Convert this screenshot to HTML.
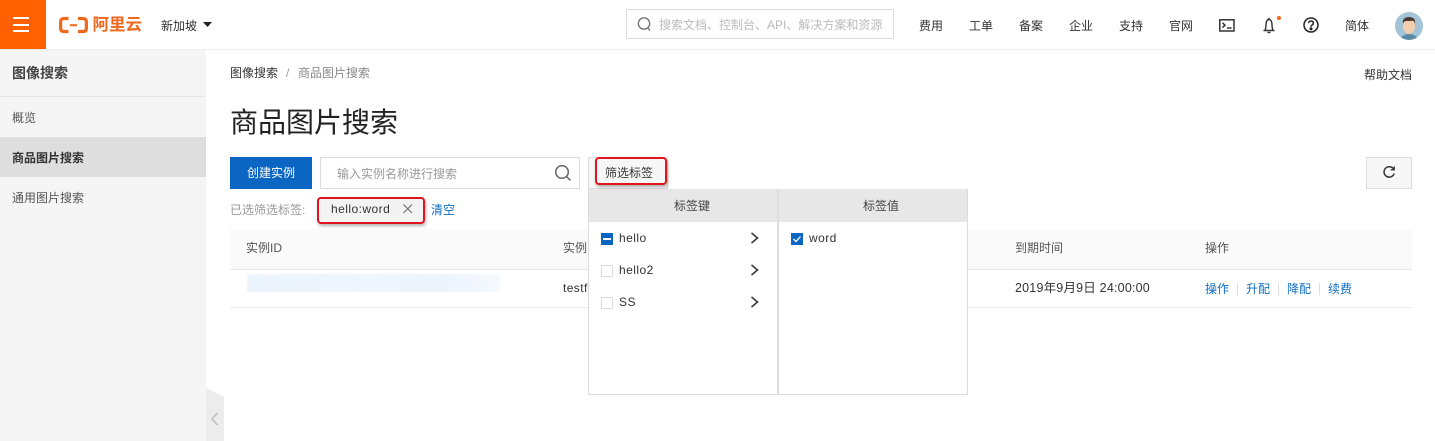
<!DOCTYPE html>
<html lang="zh-CN"><head><meta charset="utf-8"><title>商品图片搜索</title>
<style>
*{box-sizing:border-box}
html,body{margin:0;padding:0;width:1435px;height:441px;overflow:hidden;background:#fff}
body{position:relative;font-family:"Liberation Sans","Noto Sans CJK SC",sans-serif;font-size:12px;color:#333}
.a{position:absolute;white-space:nowrap}
.nav{font-size:12px;color:#333;top:18px;line-height:16px}
.link{color:#0f6fc4}
.cb{position:absolute;width:12px;height:12px;border:1px solid #ddd;background:#fff}
.cbon{background:#0a66c2;border-color:#0a66c2}
</style></head><body>
<!-- top bar -->
<div class="a" style="left:0;top:0;width:1435px;height:50px;background:#fff;border-bottom:1px solid #eee"></div>
<div class="a" style="left:0;top:0;width:46px;height:49px;background:#ff6000"></div>
<div class="a" style="left:13px;top:17px;width:16px;height:2px;background:#fff"></div>
<div class="a" style="left:13px;top:24px;width:16px;height:2px;background:#fff"></div>
<div class="a" style="left:13px;top:30px;width:16px;height:2px;background:#fff"></div>
<svg class="a" style="left:58px;top:16px" width="32" height="19" viewBox="0 0 32 19" fill="none" stroke="#f0671e" stroke-width="3.2"><path d="M10.500 2.500H6Q2.600 2.500 2.600 5.900V12.100Q2.600 15.500 6 15.500H10.500"/><path d="M20 2.500H25Q28.400 2.500 28.400 5.900V12.100Q28.400 15.500 25 15.500H20"/><path d="M12 9.200H19" stroke-width="2"/></svg>
<div class="a" style="left:92.500px;top:14px;font-size:16.500px;line-height:22px;font-weight:700;color:#f0671e">阿里云</div>
<div class="a nav" style="left:161px">新加坡</div>
<svg class="a" style="left:202.500px;top:22px" width="9" height="6"><path d="M0 0H9L4.500 5Z" fill="#222"/></svg>
<div class="a" style="left:626px;top:9px;width:268px;height:30px;border:1px solid #dcdcdc"></div>
<svg class="a" style="left:637px;top:16px" width="15" height="16" fill="none" stroke="#777" stroke-width="1.400"><circle cx="7" cy="7.500" r="5.700"/><path d="M10.800 11.800L13 14.500"/></svg>
<div class="a" style="left:659px;top:17px;font-size:12px;line-height:16px;color:#bbb">搜索文档、控制台、API、解决方案和资源</div>
<div class="a nav" style="left:919px">费用</div>
<div class="a nav" style="left:969px">工单</div>
<div class="a nav" style="left:1019px">备案</div>
<div class="a nav" style="left:1069px">企业</div>
<div class="a nav" style="left:1119px">支持</div>
<div class="a nav" style="left:1169px">官网</div>
<svg class="a" style="left:1219px;top:19px" width="16" height="13" fill="none" stroke="#333" stroke-width="1.500"><rect x=".8" y=".8" width="14.200" height="11.200"/><path d="M3.500 3.800L6 6.200L3.500 8.600M8 9H12.500"/></svg>
<svg class="a" style="left:1262px;top:15px" width="20" height="20" fill="none" stroke="#333" stroke-width="1.400"><path d="M1.500 15.500H12.500M3 15.500C4.200 13 3.800 11.500 4.100 8.500C4.400 6 5.500 4.500 7 4.500C8.500 4.500 9.600 6 9.900 8.500C10.200 11.500 9.800 13 11 15.500"/><path d="M5.500 17.500H8.500"/><path d="M7 2.800V4.500"/><circle cx="17" cy="3" r="2" fill="#f0671e" stroke="none"/></svg>
<svg class="a" style="left:1303px;top:17px" width="16" height="16" fill="none" stroke="#222" stroke-width="1.500"><circle cx="8" cy="8" r="7"/><path d="M5.600 6.300C5.600 3.200 10.400 3.200 10.400 6.200C10.400 7.800 8 7.800 8 9.800"/><circle cx="8" cy="11.800" r=".8" fill="#222"/></svg>
<div class="a nav" style="left:1345px">简体</div>
<svg class="a" style="left:1395px;top:12px" width="28" height="28" viewBox="0 0 28 28"><defs><clipPath id="c"><circle cx="14" cy="14" r="14"/></clipPath></defs><g clip-path="url(#c)"><rect width="28" height="28" fill="#a3c4d6"/><path d="M5 28C6 24 10 22 14 22C18 22 22 24 23 28Z" fill="#5d88a4"/><ellipse cx="14" cy="14" rx="6" ry="8" fill="#f4cdae"/><path d="M8 12C7 6.500 10.500 5 14 5C18 5 21 7 20 12C19.700 10 19 9 17.500 8.800C15 9.300 11 8.500 9.500 9.500C8.800 10 8.400 11 8 12Z" fill="#4a3a30"/></g></svg>
<!-- sidebar -->
<div class="a" style="left:0;top:50px;width:206px;height:391px;background:#f5f5f5"></div>
<div class="a" style="left:12px;top:64px;font-size:14px;line-height:18px;font-weight:700;color:#444">图像搜索</div>
<div class="a" style="left:0;top:96px;width:206px;height:1px;background:#e6e6e6"></div>
<div class="a" style="left:12px;top:110px;line-height:16px;color:#555">概览</div>
<div class="a" style="left:0;top:137px;width:206px;height:40px;background:#dedede"></div>
<div class="a" style="left:12px;top:150px;line-height:16px;color:#333;font-weight:700">商品图片搜索</div>
<div class="a" style="left:12px;top:190px;line-height:16px;color:#555">通用图片搜索</div>
<svg class="a" style="left:206px;top:388px" width="18" height="53"><path d="M0 0L18 9V53H0Z" fill="#ececec"/><path d="M11.500 25L6 31L11.500 37" fill="none" stroke="#bbb" stroke-width="1.500"/></svg>
<!-- main -->
<div class="a" style="left:230px;top:65px;line-height:16px;color:#333">图像搜索</div>
<div class="a" style="left:286px;top:65px;line-height:16px;color:#999">/</div>
<div class="a" style="left:298px;top:65px;line-height:16px;color:#888">商品图片搜索</div>
<div class="a" style="left:1364px;top:67px;line-height:16px;color:#333">帮助文档</div>
<div class="a" style="left:230px;top:105px;font-size:28px;line-height:36px;color:#222">商品图片搜索</div>
<div class="a" style="left:230px;top:157px;width:82px;height:32px;background:#0a66c2;color:#fff;line-height:32px;text-align:center">创建实例</div>
<div class="a" style="left:320px;top:157px;width:260px;height:32px;border:1px solid #dcdcdc"></div>
<div class="a" style="left:337px;top:166px;line-height:16px;color:#999">输入实例名称进行搜索</div>
<svg class="a" style="left:554px;top:164px" width="18" height="18" fill="none" stroke="#666" stroke-width="1.500"><circle cx="8" cy="8" r="6.300"/><path d="M12.500 12.500L16.500 16.500"/></svg>
<div class="a" style="left:588px;top:157px;width:80px;height:32px;border:1px solid #dcdcdc;background:#f7f7f7"></div>
<div class="a" style="left:605px;top:165px;line-height:16px;color:#333">筛选标签</div>
<div class="a" style="left:1366px;top:157px;width:46px;height:32px;border:1px solid #dcdcdc;background:#f7f7f7"></div>
<svg class="a" style="left:1382px;top:165px" width="14" height="14" fill="none" stroke="#333" stroke-width="1.500"><path d="M11.800 4.400A5.200 5.200 0 1 0 12.200 8.500"/><path d="M12.200 1.500V4.800H8.800" stroke-width="1.400"/></svg>
<div class="a" style="left:230px;top:202px;line-height:16px;color:#999">已选筛选标签:</div>
<div class="a" style="left:318px;top:197px;width:106px;height:25px;background:#f3f3f3"></div>
<div class="a" style="left:331px;top:201px;line-height:16px;color:#333;letter-spacing:.45px">hello:word</div>
<svg class="a" style="left:403px;top:204px" width="10" height="10" fill="none" stroke="#666" stroke-width="1"><path d="M.5 .5L9 9M9 .5L.5 9"/></svg>
<div class="a link" style="left:431px;top:202px;line-height:16px">清空</div>
<!-- table -->
<div class="a" style="left:230px;top:229px;width:1182px;height:41px;background:#fafafa;border-bottom:1px solid #e6e6e6"></div>
<div class="a" style="left:246px;top:240px;line-height:16px;color:#555">实例ID</div>
<div class="a" style="left:563px;top:240px;line-height:16px;color:#555">实例</div>
<div class="a" style="left:1015px;top:240px;line-height:16px;color:#555">到期时间</div>
<div class="a" style="left:1205px;top:240px;line-height:16px;color:#555">操作</div>
<div class="a" style="left:230px;top:307px;width:1182px;height:1px;background:#e8e8e8"></div>
<div class="a" style="left:247px;top:274px;width:253px;height:18px;background:linear-gradient(90deg,#ebf3fc,#f0f6fd 50%,#ecf3fc 75%,#f6fafe);filter:blur(.6px)"></div>
<div class="a" style="left:563px;top:280px;line-height:16px;color:#333;letter-spacing:.4px">testf</div>
<div class="a" style="left:1015px;top:280px;font-size:12.500px;line-height:16px;color:#333;letter-spacing:.2px">2019年9月9日 24:00:00</div>
<div class="a link" style="left:1205px;top:281px;line-height:16px">操作</div>
<div class="a" style="left:1237px;top:283px;width:1px;height:12px;background:#ddd"></div>
<div class="a link" style="left:1246px;top:281px;line-height:16px">升配</div>
<div class="a" style="left:1278px;top:283px;width:1px;height:12px;background:#ddd"></div>
<div class="a link" style="left:1287px;top:281px;line-height:16px">降配</div>
<div class="a" style="left:1319px;top:283px;width:1px;height:12px;background:#ddd"></div>
<div class="a link" style="left:1328px;top:281px;line-height:16px">续费</div>
<!-- dropdown -->
<div class="a" style="left:588px;top:189px;width:380px;height:206px;background:#fff;border:1px solid #dcdcdc;border-top:0"></div>
<div class="a" style="left:589px;top:189px;width:378px;height:33px;background:#e8e7e8"></div>
<div class="a" style="left:777px;top:189px;width:2px;height:206px;background:#dedede"></div>
<div class="a" style="left:674px;top:198px;line-height:16px;color:#444">标签键</div>
<div class="a" style="left:863px;top:198px;line-height:16px;color:#444">标签值</div>
<div class="cb cbon" style="left:601px;top:233px"></div>
<div class="a" style="left:603px;top:238px;width:8px;height:2px;background:#fff"></div>
<div class="a" style="left:619px;top:230px;line-height:16px;color:#333;letter-spacing:.45px">hello</div>
<div class="cb" style="left:601px;top:265px"></div>
<div class="a" style="left:619px;top:262px;line-height:16px;color:#333;letter-spacing:.45px">hello2</div>
<div class="cb" style="left:601px;top:297px"></div>
<div class="a" style="left:619px;top:294px;line-height:16px;color:#333;letter-spacing:.45px">SS</div>
<svg class="a" style="left:750px;top:232px" width="10" height="76" fill="none" stroke="#333" stroke-width="1.500"><path d="M1.500 1L7.500 6L1.500 11M1.500 33L7.500 38L1.500 43M1.500 65L7.500 70L1.500 75"/></svg>
<div class="cb cbon" style="left:791px;top:233px"></div>
<svg class="a" style="left:791px;top:233px" width="12" height="12" fill="none" stroke="#fff" stroke-width="1.300"><path d="M2.500 6L5 8.500L9.500 3.500"/></svg>
<div class="a" style="left:809px;top:230px;line-height:16px;color:#333;letter-spacing:.45px">word</div>
<!-- red annotations -->
<div class="a" style="left:595px;top:157px;width:72px;height:28px;border:2px solid #e0141c;border-radius:4px;box-shadow:1px 2px 3px rgba(0,0,0,.3)"></div>
<div class="a" style="left:317px;top:197px;width:108px;height:27px;border:2px solid #e0141c;border-radius:4px;box-shadow:1px 2px 3px rgba(0,0,0,.3)"></div>
</body></html>
